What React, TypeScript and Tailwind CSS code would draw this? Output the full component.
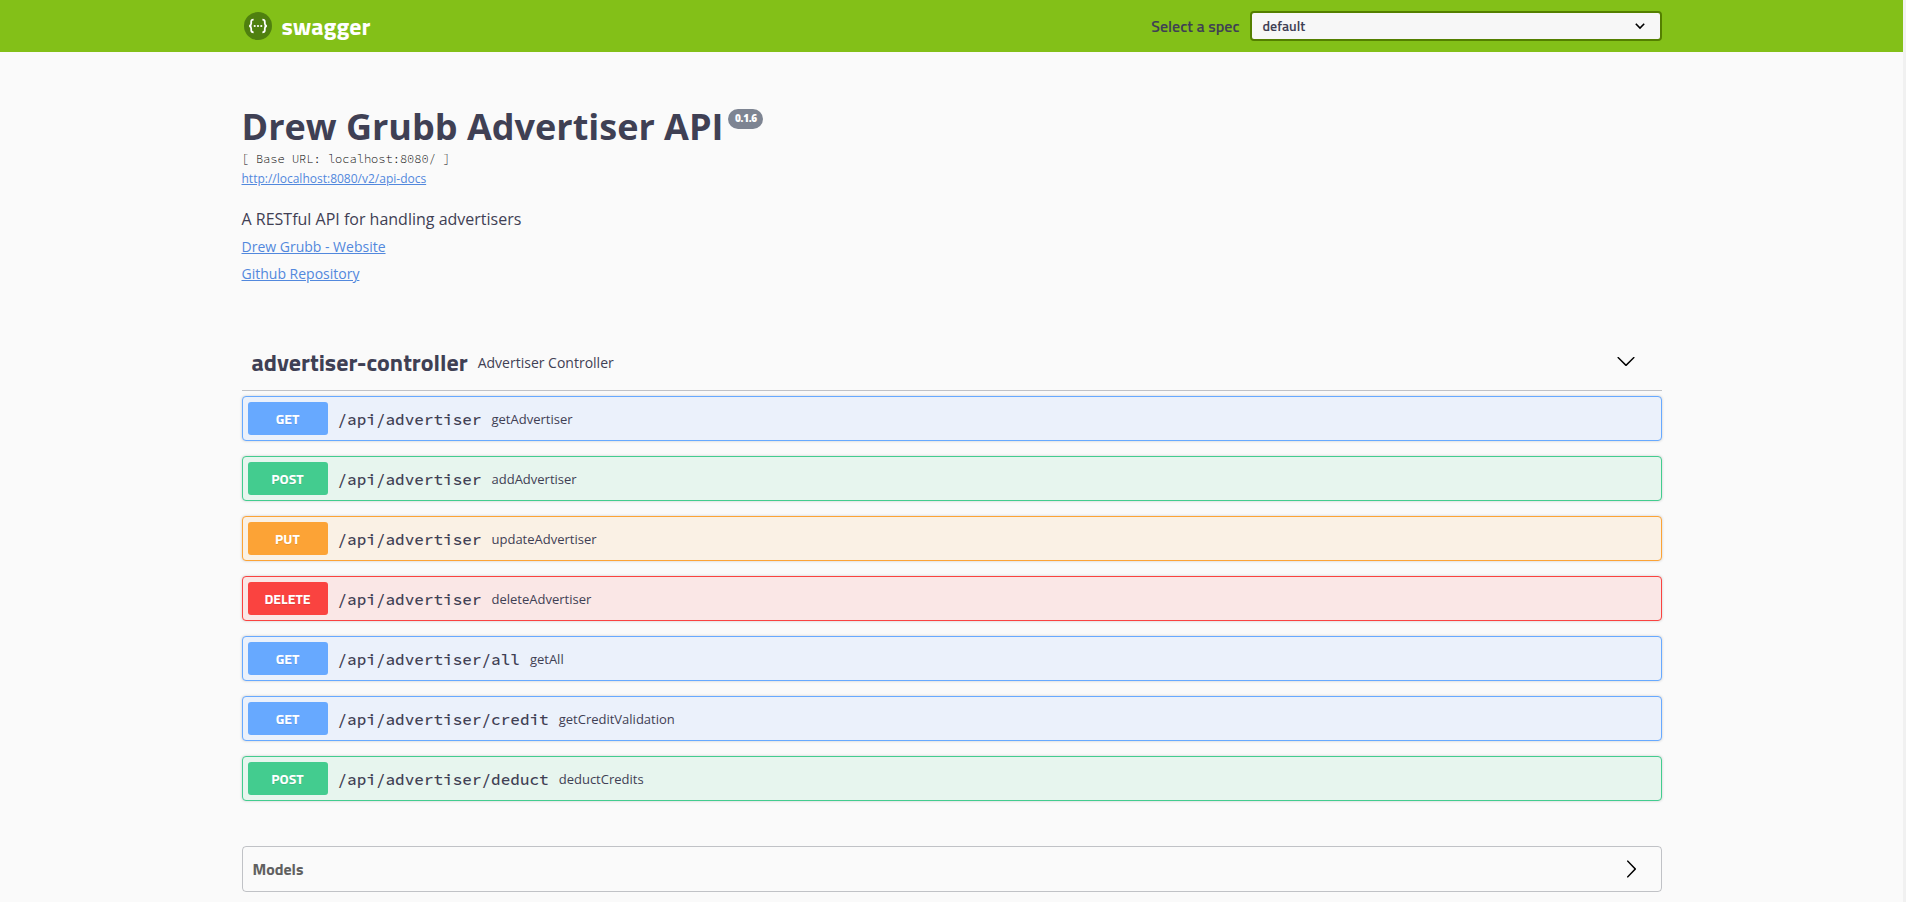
type Method = "GET" | "POST" | "PUT" | "DELETE";

const blockStyles: Record<Method, { row: string; badge: string }> = {
  GET: { row: "border-[#67a9ff] bg-[#ebf1fb]", badge: "bg-[#67a9ff]" },
  POST: { row: "border-[#43cc8f] bg-[#e7f5ee]", badge: "bg-[#43cc8f]" },
  PUT: { row: "border-[#fca336] bg-[#faf1e5]", badge: "bg-[#fca336]" },
  DELETE: { row: "border-[#fa4340] bg-[#fae7e6]", badge: "bg-[#fa4340]" },
};

const operations: { method: Method; path: string; summary: string }[] = [
  { method: "GET", path: "/api/advertiser", summary: "getAdvertiser" },
  { method: "POST", path: "/api/advertiser", summary: "addAdvertiser" },
  { method: "PUT", path: "/api/advertiser", summary: "updateAdvertiser" },
  { method: "DELETE", path: "/api/advertiser", summary: "deleteAdvertiser" },
  { method: "GET", path: "/api/advertiser/all", summary: "getAll" },
  { method: "GET", path: "/api/advertiser/credit", summary: "getCreditValidation" },
  { method: "POST", path: "/api/advertiser/deduct", summary: "deductCredits" },
];

function Arrow({ className }: { className?: string }) {
  return (
    <svg viewBox="0 0 20 20" className={"size-5 " + (className ?? "")}>
      <path d="M17.418 6.109c.272-.268.709-.268.979 0s.271.701 0 .969l-7.908 7.83c-.27.268-.707.268-.979 0l-7.908-7.83c-.27-.268-.27-.701 0-.969.271-.268.709-.268.979 0L10 13.25l7.418-7.141z" />
    </svg>
  );
}

function SelectArrow() {
  return (
    <svg viewBox="0 0 12 12" className="size-3" fill="none" stroke="#000" strokeWidth="1.6">
      <path d="M1.8 3.8L6 8l4.2-4.2" />
    </svg>
  );
}

function Logo() {
  return (
    <div className="flex items-center">
      <svg viewBox="0 0 28 28" className="size-7">
        <circle cx="14" cy="14" r="14" fill="#4f800f" />
        <g fill="none" stroke="#fff" strokeWidth="1.8">
          <path d="M9.6 7.7c-2 0-2.4.6-2.4 2v1.9c0 1.5-.6 2.1-1.9 2.4 1.3.3 1.9.9 1.9 2.4v1.9c0 1.4.4 2 2.4 2" />
          <path d="M18.4 7.7c2 0 2.4.6 2.4 2v1.9c0 1.5.6 2.1 1.9 2.4-1.3.3-1.9.9-1.9 2.4v1.9c0 1.4-.4 2-2.4 2" />
        </g>
        <g fill="#fff">
          <circle cx="10.7" cy="14" r="1.1" />
          <circle cx="14" cy="14" r="1.1" />
          <circle cx="17.3" cy="14" r="1.1" />
        </g>
      </svg>
      <span className="ml-2.5 text-2xl font-bold text-white">swagger</span>
    </div>
  );
}

function Operation({ method, path, summary }: (typeof operations)[number]) {
  const s = blockStyles[method];
  return (
    <div className={"flex h-[45px] items-center rounded border p-[5px] shadow-[0_0_3px_rgba(0,0,0,0.19)] " + s.row}>
      <span
        className={
          "h-[33px] w-20 rounded-[3px] pt-1.5 text-center font-['Titillium_Web',Roboto,sans-serif] text-sm leading-[21px] font-bold text-white [text-shadow:0_1px_0_rgba(0,0,0,0.1)] " +
          s.badge
        }
      >
        {method}
      </span>
      <span className="px-2.5 font-['Source_Code_Pro','DejaVu_Sans_Mono',monospace] text-base font-medium">{path}</span>
      <span className="pt-0.5 text-[13px]">{summary}</span>
    </div>
  );
}

export default function App() {
  return (
    <div className="flex h-[902px] overflow-hidden bg-[#f1f1f1] pr-[3px] font-['Open_Sans',sans-serif] text-[#3f4054]">
      <div className="flex-1 bg-[#fafafa]">
        <header className="h-[52px] bg-[#83c018] font-['Titillium_Web',Roboto,sans-serif]">
          <div className="mx-auto flex h-full w-[1420px] items-center justify-between pl-[2px]">
            <Logo />
            <label className="flex items-center gap-2.5 text-base font-semibold">
              Select a spec
              <span className="flex h-[30px] w-[412px] items-center justify-between rounded border-2 border-[#547f00] bg-[#f7f7f7] pr-3.5 pl-[11px] text-sm">
                default
                <SelectArrow />
              </span>
            </label>
          </div>
        </header>
        <main className="mx-auto w-[1420px]">
          <section className="pt-[50px]">
            <h1 className="flex items-start text-4xl leading-[49px] font-bold">
              Drew Grubb Advertiser API
              <span className="mt-[7px] ml-[5px] h-5 w-[35px] rounded-full bg-[#7d8492] text-center text-[10px] leading-[19px] font-extrabold tracking-[-0.3px] text-white">
                0.1.6
              </span>
            </h1>
            <div className="font-['Source_Code_Pro','DejaVu_Sans_Mono',monospace] text-xs leading-[15px] font-light text-black">
              [ Base URL: localhost:8080/ ]
            </div>
            <a className="block pt-px text-xs leading-6 text-[#5288dd] underline">http://localhost:8080/v2/api-docs</a>
            <p className="mt-[17px] text-base leading-[22px]">A RESTful API for handling advertisers</p>
            <a className="mt-[7px] block text-sm leading-[19px] text-[#5288dd] underline">Drew Grubb - Website</a>
            <a className="mt-2 block text-sm leading-[19px] text-[#5288dd] underline">Github Repository</a>
          </section>
          <section className="mt-[51px]">
            <div className="mb-[5px] flex items-center border-b border-[rgba(59,65,81,0.3)] py-2.5 pr-[26px] pl-2.5">
              <h2 className="font-['Titillium_Web',Roboto,sans-serif] text-2xl leading-[36px] font-bold">advertiser-controller</h2>
              <span className="flex-1 px-2.5 pt-0.5 text-sm">Advertiser Controller</span>
              <Arrow className="mb-0.5 fill-black" />
            </div>
            <div className="flex flex-col gap-[15px]">
              {operations.map((op) => (
                <Operation key={op.method + op.path} {...op} />
              ))}
            </div>
          </section>
          <section className="mt-[45px] flex h-[46px] items-center justify-between rounded border border-[rgba(59,65,81,0.3)] pr-5 pl-2.5">
            <h4 className="font-['Titillium_Web',Roboto,sans-serif] text-base font-bold text-[#606060]">Models</h4>
            <Arrow className="-rotate-90 fill-black" />
          </section>
        </main>
      </div>
    </div>
  );
}
